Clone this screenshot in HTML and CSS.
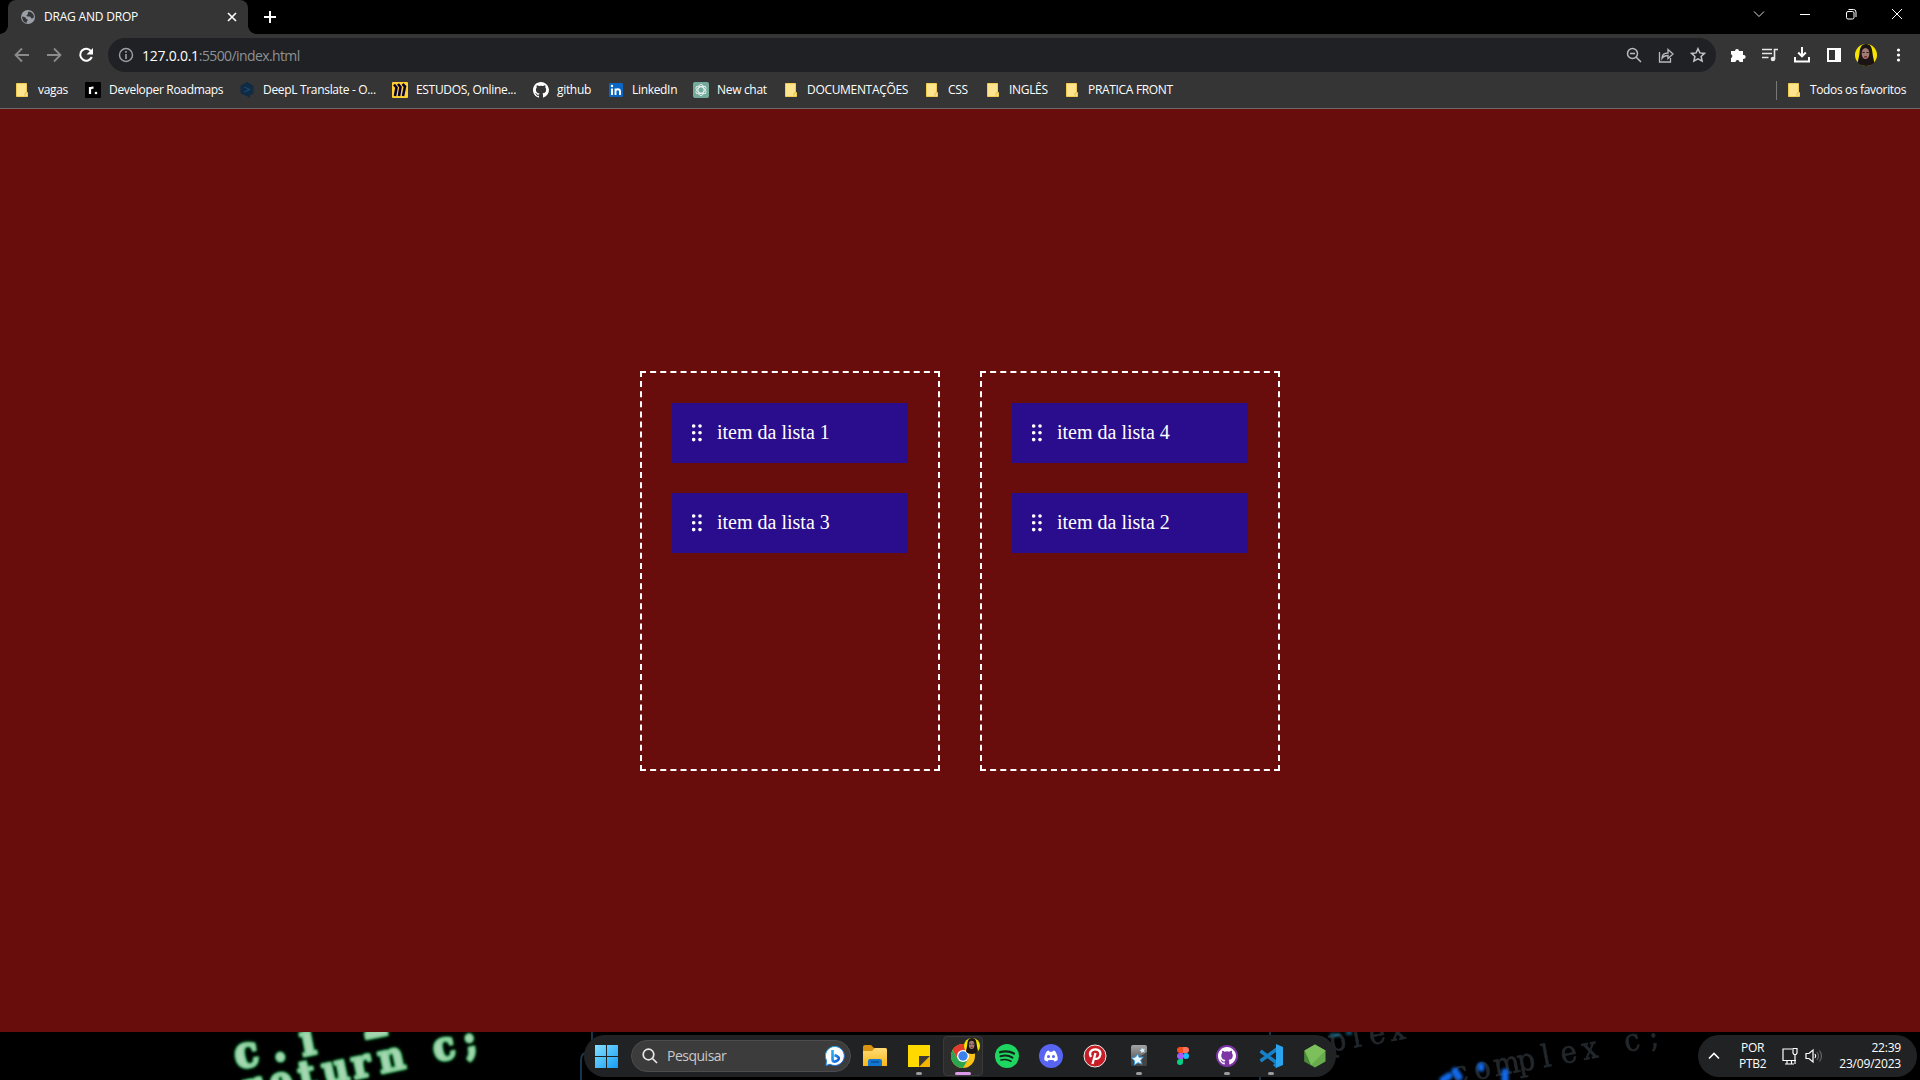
FILE: index.html
```html
<!DOCTYPE html>
<html lang="pt-BR">
<head>
<meta charset="utf-8">
<title>DRAG AND DROP</title>
<link rel="stylesheet" href="styles.css">
</head>
<body>
<svg class="defs" width="0" height="0">
  <defs>
    <symbol id="folder" viewBox="0 0 16 16"><path d="M2.5 1.5h10v9l1 0v4h-11z" fill="#ffe48f" stroke="#f1cc50"/><path d="M11 14.5v-3.5h2" fill="none" stroke="#e8c04a"/></symbol>
    <symbol id="github" viewBox="0 0 16 16"><path d="M8 0C3.58 0 0 3.58 0 8c0 3.54 2.29 6.53 5.47 7.59.4.07.55-.17.55-.38v-1.49c-2.23.49-2.69-.94-2.69-.94-.36-.93-.89-1.18-.89-1.18-.72-.5.06-.49.06-.49.8.06 1.23.82 1.23.82.71 1.22 1.87.87 2.33.66.07-.52.28-.87.5-1.07-1.77-.2-3.64-.89-3.64-3.95 0-.87.31-1.59.82-2.15-.08-.2-.36-1.02.08-2.12 0 0 .67-.21 2.2.82a7.6 7.6 0 0 1 4 0c1.53-1.04 2.2-.82 2.2-.82.44 1.1.16 1.92.08 2.12.51.56.82 1.27.82 2.15 0 3.07-1.87 3.75-3.65 3.95.29.25.54.73.54 1.48v2.19c0 .21.15.46.55.38A8 8 0 0 0 8 0z"/></symbol>
    <symbol id="face" viewBox="0 0 22 22"><circle cx="11" cy="11" r="11" fill="#f5e400"/><path d="M11 0C6 0 5 4 4.500 9c-.5 5-2 8-1.500 10 3 4 13 4 16 0 .5-2-1-5-1.500-10C17 4 16 0 11 0z" fill="#1c1414"/><ellipse cx="10.500" cy="9.500" rx="3.800" ry="5.600" fill="#a07c74"/><path d="M7.500 8.500h2.200m1.800 0h2.200" stroke="#2a1715" stroke-width="1.200"/><path d="M9.200 12.800h2.800" stroke="#7c1f24" stroke-width="1.300"/></symbol>
    <symbol id="grip" viewBox="0 0 10 18"><g fill="#fff"><circle cx="1.700" cy="2" r="1.800"/><circle cx="8" cy="2" r="1.800"/><circle cx="1.700" cy="8.800" r="1.800"/><circle cx="8" cy="8.800" r="1.800"/><circle cx="1.700" cy="15.600" r="1.800"/><circle cx="8" cy="15.600" r="1.800"/></g></symbol>
    <linearGradient id="win" x1="0" y1="0" x2="1" y2="1"><stop offset="0" stop-color="#84e0ff"/><stop offset="1" stop-color="#159cf5"/></linearGradient>
    <linearGradient id="gold" x1="0" y1="0" x2="0" y2="1"><stop offset="0" stop-color="#ffdc77"/><stop offset="1" stop-color="#f8b718"/></linearGradient>
    <linearGradient id="silver" x1="0" y1="0" x2="0" y2="1"><stop offset="0" stop-color="#a5a5a5"/><stop offset="1" stop-color="#3f3f3f"/></linearGradient>
    <linearGradient id="bing" x1="0" y1="0" x2="1" y2="1"><stop offset="0" stop-color="#25b5f2"/><stop offset="1" stop-color="#1557d6"/></linearGradient>
  </defs>
</svg>

<header class="browser">
  <div class="tabstrip">
    <div class="tab">
      <svg width="14" height="14" viewBox="0 0 14 14"><circle cx="7" cy="7" r="7" fill="#9aa0a6"/><path d="M8 1.500c-1 .5-1.500 1-1 2 .5 1-1.500 1-1.500 2s1.500 1 3 1 1 2 2.500 2 1.500-1 2-2C12.500 4 11 2 8 1.500zM1.200 6.500c2 .5 4 .8 4 2.500 1.500 0 2 1 1 2s-.5 1.500-.5 2C3 12.500 1 10 1.200 6.500z" fill="#35363a"/></svg>
      <span class="tab-title">DRAG AND DROP</span>
      <svg class="tab-close" width="10" height="10" viewBox="0 0 10 10"><path d="M1 1l8 8M9 1l-8 8" stroke="#fff" stroke-width="1.600"/></svg>
    </div>
    <svg class="new-tab" width="12" height="12" viewBox="0 0 12 12"><path d="M6 0v12M0 6h12" stroke="#fff" stroke-width="2"/></svg>
    <div class="window-controls">
      <svg viewBox="0 0 12 12"><path d="M1 3.500l5 5 5-5" fill="none" stroke="#ddd"/></svg>
      <svg viewBox="0 0 12 12"><path d="M1 6.500h10" stroke="#fff"/></svg>
      <svg viewBox="0 0 12 12"><g fill="none" stroke="#fff"><rect x="1.500" y="3.500" width="7.500" height="7.500" rx="1.500"/><path d="M3.500 1.500h5a2.500 2.500 0 0 1 2.500 2.500v5"/></g></svg>
      <svg viewBox="0 0 12 12"><path d="M1 1l10 10M11 1L1 11" stroke="#fff"/></svg>
    </div>
  </div>

  <div class="toolbar">
    <svg class="nav" viewBox="0 0 16 16"><path d="M15 8H2M8 1.500L1.500 8 8 14.500" fill="none" stroke="#8b8b8b" stroke-width="1.800"/></svg>
    <svg class="nav" viewBox="0 0 16 16"><path d="M1 8h13M8 1.500L14.500 8 8 14.500" fill="none" stroke="#8b8b8b" stroke-width="1.800"/></svg>
    <svg class="nav" viewBox="0 0 16 16"><path d="M13.200 4.300A6 6 0 1 0 13.800 10" fill="none" stroke="#fff" stroke-width="2"/><path d="M15 1v6.500H8.500z" fill="#fff"/></svg>
    <div class="omnibox">
      <svg width="16" height="16" viewBox="0 0 16 16"><circle cx="8" cy="8" r="6.500" fill="none" stroke="#9aa0a6" stroke-width="1.400"/><path d="M8 7v5M8 4v1.800" stroke="#9aa0a6" stroke-width="1.600"/></svg>
      <span class="url"><b>127.0.0.1</b>:5500/index.html</span>
      <div class="omni-actions">
        <svg viewBox="0 0 16 16"><g fill="none" stroke="#b8babd" stroke-width="1.500"><circle cx="6.500" cy="6.500" r="5"/><path d="M10 10l5 5M4 6.500h5"/></g></svg>
        <svg viewBox="0 0 16 16"><g fill="none" stroke="#b8babd" stroke-width="1.300"><path d="M1.500 5v10h11v-4"/><path d="M4 11.500c0-4 2.500-5.500 6-5.500V2.500L15 7l-5 4.500V8.500C7 8.500 5.500 9 4 11.500z"/></g></svg>
        <svg viewBox="0 0 16 16"><path d="M8 1.700l1.900 4.200 4.600.5-3.400 3.100 1 4.600L8 11.800l-4.100 2.300 1-4.600L1.500 6.400l4.600-.5z" fill="none" stroke="#c3c5c8" stroke-width="1.500"/></svg>
      </div>
    </div>
    <div class="extensions">
      <svg viewBox="0 0 16 16"><path d="M1 4h4a2 2 0 1 1 4 0h4v4a2 2 0 1 1 0 3.800V15H9.500a2 2 0 0 0-4 0H1v-4a2 2 0 0 0 0-3.800z" fill="#fff"/></svg>
      <svg viewBox="0 0 16 16"><path d="M0 2.500h10M0 6.500h10M0 10.500h6.500M12.500 12V2.500H16" fill="none" stroke="#e8e8e8" stroke-width="1.600"/><circle cx="11" cy="12" r="2.300" fill="#e8e8e8"/></svg>
      <svg viewBox="0 0 16 16"><path d="M8 0v9M4.200 5.500L8 9.300l3.800-3.800M1 10v4.500h14V10" fill="none" stroke="#fff" stroke-width="2"/></svg>
      <svg viewBox="0 0 16 16"><path d="M1 1h14v14H1z M3 3v10h6V3z" fill="#fff" fill-rule="evenodd"/></svg>
      <svg class="avatar" viewBox="0 0 22 22"><use href="#face"/></svg>
      <svg viewBox="0 0 16 16"><g fill="#fff"><circle cx="8.500" cy="3" r="1.600"/><circle cx="8.500" cy="8" r="1.600"/><circle cx="8.500" cy="13" r="1.600"/></g></svg>
    </div>
  </div>

  <nav class="bookmarks">
    <div class="bookmark-list">
      <a class="bookmark"><svg><use href="#folder"/></svg><span>vagas</span></a>
      <a class="bookmark"><svg viewBox="0 0 16 16"><rect width="16" height="16" rx="1" fill="#000"/><path d="M5 12V5M5 8c0-2 1.500-2.500 3.500-2.200" fill="none" stroke="#fff" stroke-width="2.200"/><circle cx="11" cy="11" r="1.300" fill="#fff"/></svg><span>Developer Roadmaps</span></a>
      <a class="bookmark"><svg viewBox="0 0 16 16"><path d="M8 0L14.500 3.700v7.600L11 13.500V16l-3.500-2L1.500 11.300V3.700z" fill="#0f2b46"/><path d="M5.500 5l5 2.500-5 2.500" fill="none" stroke="#1c4a70" stroke-width="1.200"/></svg><span>DeepL Translate - O...</span></a>
      <a class="bookmark"><svg viewBox="0 0 16 16"><rect width="16" height="16" rx="1" fill="#ffd02f"/><path d="M2 2.500l2.500 3L3 14M6 2l2.500 3L7 14M10.500 2L13 4.500 11 14" fill="none" stroke="#050038" stroke-width="2.600"/></svg><span>ESTUDOS, Online...</span></a>
      <a class="bookmark"><svg viewBox="0 0 16 16" fill="#fff"><use href="#github"/></svg><span>github</span></a>
      <a class="bookmark"><svg viewBox="0 0 16 16"><rect x="1" y="1" width="14" height="14" rx="1" fill="#0a66c2"/><path d="M4 6.500V13M7.500 13V6.500M7.500 9.500c0-3 4.500-3 4.500 0V13" fill="none" stroke="#fff" stroke-width="1.900"/><circle cx="4" cy="4" r="1.200" fill="#fff"/></svg><span>LinkedIn</span></a>
      <a class="bookmark"><svg viewBox="0 0 16 16"><rect width="16" height="16" rx="2" fill="#74aa9c"/><g fill="none" stroke="#e9f4f1" stroke-width=".9"><ellipse cx="8" cy="8" rx="3" ry="5.600"/><ellipse cx="8" cy="8" rx="3" ry="5.600" transform="rotate(60 8 8)"/><ellipse cx="8" cy="8" rx="3" ry="5.600" transform="rotate(120 8 8)"/></g></svg><span>New chat</span></a>
      <a class="bookmark"><svg><use href="#folder"/></svg><span>DOCUMENTAÇÕES</span></a>
      <a class="bookmark"><svg><use href="#folder"/></svg><span>CSS</span></a>
      <a class="bookmark"><svg><use href="#folder"/></svg><span>INGLÊS</span></a>
      <a class="bookmark"><svg><use href="#folder"/></svg><span>PRATICA FRONT</span></a>
    </div>
    <a class="bookmark all-bookmarks"><svg><use href="#folder"/></svg><span>Todos os favoritos</span></a>
  </nav>
</header>

<main class="board">
  <ul class="column">
    <li class="item"><svg><use href="#grip"/></svg><span>item da lista 1</span></li>
    <li class="item"><svg><use href="#grip"/></svg><span>item da lista 3</span></li>
  </ul>
  <ul class="column">
    <li class="item"><svg><use href="#grip"/></svg><span>item da lista 4</span></li>
    <li class="item"><svg><use href="#grip"/></svg><span>item da lista 2</span></li>
  </ul>
</main>

<footer class="taskbar">
  <svg class="wallpaper" width="1920" height="48" viewBox="0 0 1920 48">
    <g class="code green">
      <text transform="translate(237 37) rotate(-11)" font-size="44" x="0 38 67 94 130" y="0 0 0 0 -5">c.i 2</text>
      <text transform="translate(246 70) rotate(-12)" font-size="40" x="0 27 57 81 111 138 165 194 225">return c;</text>
    </g>
    <g class="code dim">
      <text transform="translate(1330 20) rotate(-10)" font-size="31" x="0 24 41 62">plex</text>
      <text transform="translate(1454 52) rotate(-10.500)" font-size="31" x="0 22 42 66 91 110 132 155 175 200">complex c;</text>
    </g>
    <g class="glow"><path d="M1443 48l6-4M1455 39l4 6M1481 34v2M1505 40v8" stroke="#1269e8" stroke-width="7" stroke-linecap="round"/><path d="M1330 3h10M1346 1h6" stroke="#1c6f8c" stroke-width="3"/></g>
    <g fill="none" stroke="#17364d" stroke-width="2"><path d="M592 0v12M581 48V28q0-7 7-8M1270 0v4M1260 48v-5"/></g>
  </svg>

  <div class="dock">
    <svg class="start" viewBox="0 0 23 23"><path d="M0 0h11v11H0zM12 0h11v11H12zM0 12h11v11H0zM12 12h11v11H12z" fill="url(#win)"/></svg>
    <div class="search">
      <svg width="16" height="16" viewBox="0 0 16 16"><g fill="none" stroke="#e8e8e8" stroke-width="1.700"><circle cx="6.500" cy="6.500" r="5.300"/><path d="M10.500 10.500l4.500 4.500"/></g></svg>
      <span>Pesquisar</span>
      <svg class="bing" width="20" height="20" viewBox="0 0 20 20"><path d="M10 .5a9.500 9.500 0 1 1-5 17.700L1 19.500l.5-5A9.500 9.500 0 0 1 10 .5z" fill="#fff" stroke="url(#bing)"/><path d="M7.500 4v9.500c0 2.500 2 2.500 4 1.500s3.500-3 1-4.500l-3-1.500" fill="none" stroke="url(#bing)" stroke-width="2.600"/></svg>
    </div>
    <div class="apps">
      <div class="app"><svg viewBox="0 0 24 24"><path d="M0 3q0-2 2-2h6l3 3h11q2 0 2 2v6H0z" fill="#d9950f"/><path d="M0 7h9l3-3h10q2 0 2 2v16H0z" fill="url(#gold)"/><path d="M5 22v-5q0-2 2-2h10q2 0 2 2v5z" fill="#1377cf"/><path d="M8 18h8" stroke="#0b4f97" stroke-width="1.500"/></svg></div>
      <div class="app open"><svg viewBox="0 0 24 24"><path d="M1 1h22v11L12 23H1z" fill="#ffd900"/><path d="M12 23V12h11z" fill="#3e3b35"/><path d="M12 23l11-11v11z" fill="#f5b400"/></svg></div>
      <div class="app open active"><svg viewBox="0 0 24 24"><circle cx="12" cy="12" r="12" fill="#fbc116"/><path d="M12 6h10.400A12 12 0 0 0 1.600 6l5.200 9z" fill="#e33b2e"/><path d="M1.600 6A12 12 0 0 0 12 24l5.200-9H6.800z" fill="#2da44e"/><circle cx="12" cy="12" r="6" fill="#fff"/><circle cx="12" cy="12" r="4.700" fill="#3b82f0"/></svg><svg class="profile" viewBox="0 0 22 22"><use href="#face"/></svg></div>
      <div class="app"><svg viewBox="0 0 24 24"><circle cx="12" cy="12" r="12" fill="#1ed760"/><g fill="none" stroke="#14251a" stroke-linecap="round"><path d="M5 8.200c5-1.500 10-1 14 1.400" stroke-width="2.300"/><path d="M5.500 12.300c4.500-1.300 8.500-.8 12 1.300" stroke-width="2"/><path d="M6 16c4-1 7-.6 10 1.200" stroke-width="1.600"/></g></svg></div>
      <div class="app"><svg viewBox="0 0 24 24"><circle cx="12" cy="12" r="12" fill="#5865f2"/><path d="M8 7l1.800-.4.700 1.100h3l.7-1.100L16 7c2 3 3 6 2.700 9-1 .9-2.200 1.300-3.300 1.500l-1-1.500h-4.800l-1 1.500c-1.100-.2-2.300-.6-3.300-1.500C5 13 6 10 8 7z" fill="#fff"/><circle cx="9.500" cy="12.400" r="1.500" fill="#5865f2"/><circle cx="14.500" cy="12.400" r="1.500" fill="#5865f2"/></svg></div>
      <div class="app"><svg viewBox="0 0 24 24"><circle cx="12" cy="12" r="11" fill="#c61e26" stroke="#eee"/><path d="M9.500 20l3-11M8 13C5.500 9 8 5.300 12.200 5.300c5 0 6.500 4.300 4.300 7.700-1.700 2.600-4.500 2.200-5.200.7" fill="none" stroke="#fff" stroke-width="2.300"/></svg></div>
      <div class="app open"><svg viewBox="0 0 24 24"><rect x="4" y="1" width="16" height="21" rx="2" fill="url(#silver)"/><path d="M4 14q8 0 16-6v12q0 2-2 2H6q-2 0-2-2z" fill="#444"/><path d="M10.500 10l1.700 3.300 4-.3-2.500 3.200 1.300 4-4-1.500-3.600 2.300.2-4.200-3-2.800 4-1z" fill="#e8f6ff" stroke="#3b9ade"/><path d="M15 3.500l1 1.500 2-.2-1 1.700.8 1.800-2-.3-1.300 1.300-.3-1.900-1.700-.9 1.800-.9z" fill="#d6efff"/></svg></div>
      <div class="app"><svg viewBox="0 0 24 24"><path d="M9 3h3v6H9a3 3 0 0 1 0-6z" fill="#f24e1e"/><path d="M12 3h3a3 3 0 0 1 0 6h-3z" fill="#ff7262"/><path d="M12 9H9a3 3 0 0 0 0 6h3z" fill="#a259ff"/><circle cx="15" cy="12" r="3" fill="#1abcfe"/><path d="M9 15h3v3a3 3 0 1 1-3-3z" fill="#0acf83"/></svg></div>
      <div class="app open"><svg viewBox="0 0 24 24"><circle cx="12" cy="12" r="11" fill="#7d35a6"/><svg x="3" y="3" width="18" height="18" viewBox="0 0 16 16" fill="#fff"><use href="#github"/></svg></svg></div>
      <div class="app open"><svg viewBox="0 0 24 24"><path d="M18 5L1.500 17M18 19L1.500 7" stroke="#1681c8" stroke-width="3.500"/><path d="M17 0l7 3v18l-7 3z" fill="#2ba4ef"/><path d="M17 0v24l-3-3 3-3z" fill="#1681c8"/></svg></div>
      <div class="app"><svg viewBox="0 0 24 24"><path d="M12 .5l10.500 6v11L12 23.500l-10.500-6v-11z" fill="#67ab4c"/><path d="M1.500 6.500L12 .5l10.500 6L8 21z" fill="#7cbf5b"/><path d="M1.500 6.500L8 21l-6.500-3.500z" fill="#468b38"/></svg></div>
    </div>
  </div>

  <div class="tray">
    <svg width="12" height="12" viewBox="0 0 12 12"><path d="M1 8.500l5-5 5 5" fill="none" stroke="#fff" stroke-width="1.600"/></svg>
    <div class="lang">POR<br>PTB2</div>
    <svg class="network" width="18" height="18" viewBox="0 0 18 18"><g fill="none" stroke="#fff" stroke-width="1.200"><path d="M11 2H2v11.500h13M6 14v3M10.500 14v3M4 17h9M12 1.500h4V6l-1 1.500h-2L12 6zM14 7.500V17"/></g></svg>
    <svg class="volume" width="18" height="16" viewBox="0 0 18 16"><g fill="none" stroke="#fff" stroke-width="1.200"><path d="M1 5.500v5h3l4 3.500V2L4 5.500z"/><path d="M10 6q1.500 2 0 4"/><path d="M12 4q3 4 0 8M14.500 2.500q4 5.500 0 11" stroke="#666"/></g></svg>
    <div class="clock">22:39<br>23/09/2023</div>
  </div>
</footer>
</body>
</html>
```
FILE: styles.css
```css
* { box-sizing: border-box; }
body {
  margin: 0;
  width: 1920px;
  height: 1080px;
  overflow: hidden;
  display: flex;
  flex-direction: column;
  background: #000;
  color: #fff;
  font-family: "Open Sans", "Noto Sans", sans-serif;
}
svg { display: block; flex: none; }
.defs { position: absolute; }

/* browser chrome */
.browser {
  height: 109px;
  flex: none;
  background: #353535;
  border-bottom: 1px solid #6b6b6b;
  font-size: 12px;
}
.tabstrip {
  height: 34px;
  background: #000;
  display: flex;
  align-items: center;
  padding-left: 8px;
}
.tab {
  position: relative;
  width: 240px;
  height: 34px;
  padding: 0 11px 0 13px;
  display: flex;
  align-items: center;
  gap: 9px;
  background: #353535;
  border-radius: 8px 8px 0 0;
}
.tab::before,
.tab::after {
  content: "";
  position: absolute;
  bottom: 0;
  width: 8px;
  height: 8px;
}
.tab::before { left: -8px; background: radial-gradient(circle at 0 0, #000 7.500px, #353535 8px); }
.tab::after { right: -8px; background: radial-gradient(circle at 100% 0, #000 7.500px, #353535 8px); }
.tab-title { letter-spacing: -0.2px; padding-bottom: 2px; }
.tab-close { margin-left: auto; }
.new-tab { margin-left: 16px; }
.window-controls {
  margin-left: auto;
  display: flex;
  gap: 34px;
  padding: 0 17px 6px 0;
}
.window-controls svg { width: 12px; height: 12px; }

.toolbar {
  height: 38px;
  display: flex;
  align-items: flex-end;
  padding-left: 14px;
}
.nav {
  width: 16px;
  height: 16px;
  margin: 0 16px 9px 0;
}
.omnibox {
  width: 1608px;
  height: 34px;
  margin-left: -2px;
  padding: 0 10px;
  display: flex;
  align-items: center;
  gap: 8px;
  background: #202124;
  border-radius: 17px;
}
.url { font-size: 14px; color: #8e9195; letter-spacing: -0.6px; }
.url b { font-weight: 400; color: #fff; letter-spacing: -0.25px; }
.omni-actions { margin-left: auto; display: flex; gap: 16px; }
.omni-actions svg { width: 16px; height: 16px; }
.extensions {
  height: 34px;
  margin-left: 14px;
  display: flex;
  align-items: center;
  gap: 16px;
}
.extensions svg { width: 16px; height: 16px; }
.extensions .avatar { width: 22px; height: 22px; margin: 0 -3px; }

.bookmarks {
  height: 36px;
  display: flex;
  align-items: center;
  justify-content: space-between;
  padding: 0 14px;
}
.bookmark-list {
  display: grid;
  grid-template-columns: 71px 154px 153px 141px 75px 85px 90px 141px 61px 79px 130px;
}
.bookmark {
  display: flex;
  align-items: center;
  gap: 8px;
  white-space: nowrap;
  letter-spacing: -0.32px;
}
.bookmark span { padding-bottom: 2px; }
.bookmark svg { width: 16px; height: 16px; }
.all-bookmarks { border-left: 1px solid #777; padding-left: 9px; letter-spacing: -0.35px; }

/* drag and drop board */
.board {
  height: 923px;
  flex: none;
  display: flex;
  justify-content: center;
  align-items: center;
  gap: 40px;
  padding-top: 1px;
  background: #680d0b;
  font-family: "Liberation Serif", serif;
  font-size: 20px;
}
.column {
  width: 300px;
  height: 400px;
  margin: 0;
  padding: 30px;
  border: 2px dashed #fff;
  list-style: none;
  display: flex;
  flex-direction: column;
  gap: 30px;
}
.item {
  height: 60px;
  padding-left: 20px;
  display: flex;
  align-items: center;
  gap: 15px;
  background: #2a0d8c;
}
.item span { padding-bottom: 1px; }
.item svg { width: 10px; height: 18px; }

/* taskbar */
.taskbar {
  position: relative;
  height: 48px;
  display: flex;
  justify-content: space-between;
  padding: 3px 3px 3px 584px;
}
.wallpaper { position: absolute; left: 0; top: 0; }
.code { font-family: "DejaVu Serif Condensed", "DejaVu Serif", serif; font-stretch: condensed; }
.green {
  font-weight: 700;
  fill: #a9d6b4;
  stroke: #8fcf9f;
  stroke-width: 2px;
  filter: blur(0.8px) drop-shadow(0 0 1.500px #12b04a);
}
.dim { fill: #22272b; stroke: #22272b; stroke-width: 0.6px; filter: blur(0.6px); }
.glow { filter: blur(1.500px); }
.dock, .tray {
  position: relative;
  height: 42px;
  display: flex;
  align-items: center;
  background: #212223;
  border-radius: 21px;
}
.dock { width: 752px; padding-left: 11px; }
.start { width: 23px; height: 23px; }
.search {
  flex: none;
  width: 220px;
  height: 32px;
  margin-left: 13px;
  padding: 0 5px 0 10px;
  display: flex;
  align-items: center;
  gap: 9px;
  background: #3c3c3c;
  border: 1px solid #4c4c4c;
  border-radius: 16px;
  font-size: 14px;
  color: #c9c9c9;
  letter-spacing: -0.5px;
}
.search span { padding-bottom: 1px; }
.bing { margin-left: auto; }
.apps { display: flex; margin-left: 2px; }
.app {
  position: relative;
  flex: none;
  width: 44px;
  height: 42px;
  display: grid;
  place-items: center;
}
.app > svg { width: 24px; height: 24px; }
.app.open::after {
  content: "";
  position: absolute;
  bottom: 2px;
  left: 19px;
  width: 6px;
  height: 3px;
  border-radius: 2px;
  background: #9b9b9b;
}
.app.active::before {
  content: "";
  position: absolute;
  inset: 1px 2px;
  border: 1px solid #3a3a3a;
  border-radius: 4px;
  background: #2c2c2c;
}
.app.active > svg { position: relative; }
.app.active::after { left: 14px; width: 16px; background: #dc9be6; }
.app.active > .profile { position: absolute; left: 23px; top: 3px; width: 16px; height: 16px; }

.tray {
  width: 219px;
  padding: 0 16px 0 10px;
  font-size: 12px;
  line-height: 16px;
  letter-spacing: -0.2px;
}
.lang { width: 27px; margin-left: 19px; text-align: center; letter-spacing: -0.3px; }
.network { margin-left: 15px; }
.volume { margin-left: 6px; }
.clock { margin-left: auto; text-align: right; }
```
